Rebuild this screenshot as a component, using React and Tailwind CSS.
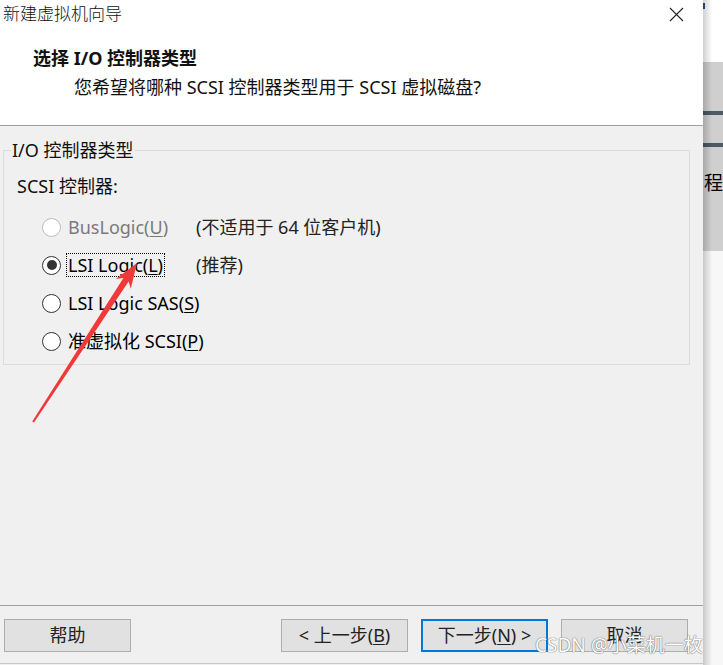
import React from 'react';

const font = { fontFamily: '"Noto Sans", "Noto Sans CJK SC", sans-serif' };

function Radio({ checked, disabled }) {
  return (
    <span
      className={`flex h-[19px] w-[19px] shrink-0 items-center justify-center rounded-full border bg-white ${
        disabled ? 'border-[#bcbcbc]' : 'border-[#333]'
      }`}
    >
      {checked && <span className="h-[10px] w-[10px] rounded-full bg-[#333]" />}
    </span>
  );
}

function Option({ label, hotkey, after, note, checked, disabled, focused }) {
  return (
    <div className="flex h-[38px] items-center whitespace-nowrap pl-[38px]">
      <Radio checked={checked} disabled={disabled} />
      <div className="ml-[5px] min-w-[130px] shrink-0">
        <span
          className={`inline-block px-[1px] leading-[22px] ${
            focused ? 'border border-dotted border-black' : 'border border-transparent'
          } ${disabled ? 'text-[#7a7a7a]' : 'text-black'}`}
        >
          {label}
          <span className="underline underline-offset-2">{hotkey}</span>
          {after}
        </span>
      </div>
      {note && <span className="text-[#222]">{note}</span>}
    </div>
  );
}

function Button({ children, primary }) {
  return (
    <button
      className={`flex h-[33px] w-[127px] items-center justify-center whitespace-nowrap bg-[#e1e1e1] text-[18px] text-[#222] ${
        primary ? 'border-2 border-[#0078d7]' : 'border border-[#adadad]'
      }`}
    >
      {children}
    </button>
  );
}

export default function App() {
  return (
    <div className="relative flex h-[665px] w-[723px] overflow-hidden bg-white text-[18px]" style={font}>
      <div className="flex w-[703px] shrink-0 flex-col">
        {/* header */}
        <div className="h-[125px] shrink-0 bg-white">
          <div className="flex h-[28px] items-center justify-between pl-[3px] pr-[18px]">
            <span className="text-[17px] font-light text-[#111]">新建虚拟机向导</span>
            <svg width="15" height="15" viewBox="0 0 15 15" className="mr-[1px]">
              <path d="M1 1 L14 14 M14 1 L1 14" stroke="#222" strokeWidth="1.1" />
            </svg>
          </div>
          <div className="mt-[18px] pl-[33px] font-bold leading-[24px] text-[#111]">选择 I/O 控制器类型</div>
          <div className="mt-[5px] pl-[74px] leading-[24px] text-[#111]">您希望将哪种 SCSI 控制器类型用于 SCSI 虚拟磁盘?</div>
        </div>
        <div className="h-px shrink-0 bg-[#a0a0a0]" />

        {/* body */}
        <div className="flex flex-1 flex-col bg-[#f0f0f0]">
          <fieldset className="ml-[3px] mt-[12px] w-[687px] border border-[#dcdcdc] pb-[4px]">
            <legend className="ml-[7px] px-[1px] leading-[24px] text-[#111]">I/O 控制器类型</legend>
            <div className="mt-[12px] pl-[13px] leading-[24px] text-[#111]">SCSI 控制器:</div>
            <div className="mt-[10px]">
              <Option label="BusLogic(" hotkey="U" after=")" note="(不适用于 64 位客户机)" disabled />
              <Option label="LSI Logic(" hotkey="L" after=")" note="(推荐)" checked focused />
              <Option label="LSI Logic SAS(" hotkey="S" after=")" />
              <Option label="准虚拟化 SCSI(" hotkey="P" after=")" />
            </div>
          </fieldset>

          <div className="flex-1" />
          <div className="h-px bg-[#a0a0a0]" />
          <div className="mt-[13px] flex pl-[4px] pr-[15px]">
            <Button>帮助</Button>
            <div className="flex-1" />
            <div className="flex gap-[13px]">
              <Button>
                &lt; 上一步(<span className="underline underline-offset-2">B</span>)
              </Button>
              <Button primary>
                下一步(<span className="underline underline-offset-2">N</span>) &gt;
              </Button>
              <Button>取消</Button>
            </div>
          </div>
          <div className="mt-[11px] h-px bg-[#c8c8c8]" />
          <div className="h-[1px]" />
        </div>
      </div>

      {/* background window at the right */}
      <div className="relative flex w-[20px] shrink-0 flex-col overflow-hidden">
        <div className="h-[62px] bg-white">
          <div className="mt-[3px] h-[6px] w-[2px] bg-[#2b4f8c]" />
        </div>
        <div className="flex h-[189px] flex-col bg-[#cfcfcf]">
          <div className="mt-[49px] h-[4px] bg-[#4b5a65]" />
          <div className="mt-[28px] h-[4px] bg-[#4b5a65]" />
          <div className="mt-[24px] whitespace-nowrap pl-[1px] text-[19px] leading-[24px] text-black">程</div>
        </div>
        <div className="flex-1 bg-[#f7f7f7]" />
        <div className="pointer-events-none absolute inset-y-0 left-0 w-[9px] bg-gradient-to-r from-[#00000030] to-transparent" />
      </div>

      {/* red arrow annotation */}
      <svg className="pointer-events-none absolute left-0 top-0" width="723" height="665">
        <polygon
          points="32.2,421.4 123.4,278.0 115.8,279.0 137,263 130.8,288.8 128.6,281.4 34.0,422.6"
          fill="#f03a3a"
        />
      </svg>

      {/* watermark */}
      <div className="pointer-events-none absolute left-[535px] top-[632px] whitespace-nowrap text-[19px] leading-[26px] text-white [text-shadow:0_0_1px_#666,0_0_1px_#666]">
        CSDN @小菜机一枚
      </div>
    </div>
  );
}
